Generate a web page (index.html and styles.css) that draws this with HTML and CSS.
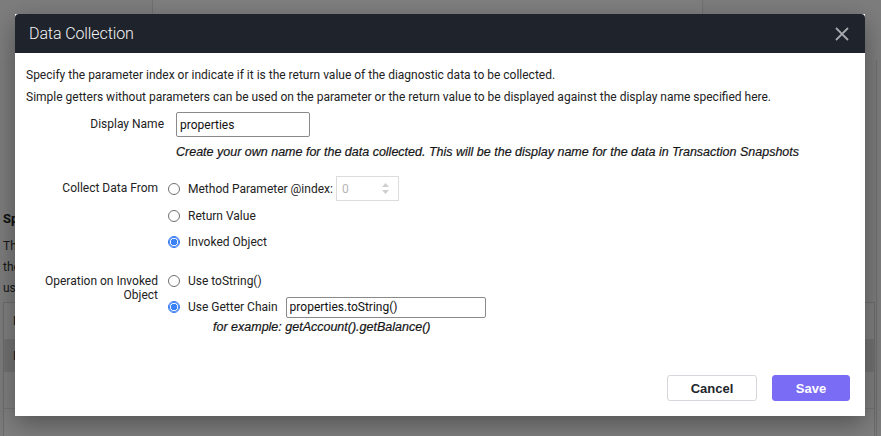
FILE: index.html
```html
<!DOCTYPE html>
<html lang="en">
<head>
<meta charset="utf-8">
<title>Data Collection</title>
<link rel="stylesheet" href="styles.css">
</head>
<body>
<div class="page">
  <div class="topbar">
    <div class="tb-a"></div>
    <div class="tb-b"></div>
    <div class="tb-c"></div>
  </div>
  <div class="content">
    <h3 class="sec-title">Spec</h3>
    <p class="sec-text">The<br>the<br>use</p>
    <div class="table">
      <div class="trow thead"><div class="cell c1">D</div><div class="cell c2"></div><div class="cell c3"></div></div>
      <div class="trow tsel"><div class="cell c1">P</div><div class="cell c2"></div><div class="cell c3"></div></div>
      <div class="trow"><div class="cell c1"></div><div class="cell c2"></div><div class="cell c3"></div></div>
    </div>
  </div>
  <div class="scroll"></div>
</div>
<div class="backdrop"></div>

<div class="modal">
  <div class="modal-header">
    <span class="modal-title">Data Collection</span>
    <svg class="close" width="14" height="14" viewBox="0 0 14 14"><path d="M1 1L13 13M13 1L1 13" stroke="#a6a8ad" stroke-width="1.8" fill="none"/></svg>
  </div>
  <div class="modal-body">
    <p class="intro">Specify the parameter index or indicate if it is the return value of the diagnostic data to be collected.</p>
    <p class="intro">Simple getters without parameters can be used on the parameter or the return value to be displayed against the display name specified here.</p>

    <div class="row row-name">
      <label class="lbl">Display Name</label>
      <div class="ctl">
        <input class="txt name-input" type="text" value="properties">
        <div class="hint">Create your own name for the data collected. This will be the display name for the data in Transaction Snapshots</div>
      </div>
    </div>

    <div class="row row-collect">
      <label class="lbl">Collect Data From</label>
      <div class="ctl">
        <div class="opt"><span class="radio"></span><span>Method Parameter @index:</span>
          <span class="num"><span class="num-val">0</span><svg class="spin" width="9" height="13" viewBox="0 0 9 13"><path d="M4.5 1L8 5H1Z M4.5 12L8 8H1Z" fill="#cfcfcf"/></svg></span>
        </div>
        <div class="opt"><span class="radio"></span><span>Return Value</span></div>
        <div class="opt"><span class="radio on"></span><span>Invoked Object</span></div>
      </div>
    </div>

    <div class="row row-op">
      <label class="lbl">Operation on Invoked Object</label>
      <div class="ctl">
        <div class="opt"><span class="radio"></span><span>Use toString()</span></div>
        <div class="opt"><span class="radio on"></span><span>Use Getter Chain</span><input class="txt getter-input" type="text" value="properties.toString()"></div>
        <div class="example">for example: getAccount().getBalance()</div>
      </div>
    </div>
  </div>
  <div class="modal-footer">
    <button class="btn btn-cancel">Cancel</button>
    <button class="btn btn-save">Save</button>
  </div>
</div>
</body>
</html>
```
FILE: styles.css
```css
html, body {
  margin: 0;
  padding: 0;
}
body {
  width: 881px;
  height: 436px;
  overflow: hidden;
  position: relative;
  font-family: Roboto, "Liberation Sans", sans-serif;
  background: #f4f4f4;
}

/* underlying page */
.page {
  height: 436px;
  display: flex;
  flex-direction: column;
  position: relative;
  overflow: hidden;
}
.topbar {
  height: 60px;
  display: flex;
  flex-shrink: 0;
}
.tb-a { width: 152px; background: #fbfbfb; border-right: 1px solid #e2e2e2; }
.tb-b { width: 549px; background: #ffffff; border-right: 1px solid #e2e2e2; }
.tb-c { flex: 1; background: #fbfbfb; }
.content {
  flex: 1;
  min-height: 0;
  overflow: hidden;
  padding: 150px 6px 0 3px;
  background: #f8f8f8;
}
.sec-title {
  margin: 0 0 8px;
  font-size: 13px;
  font-weight: 700;
  color: #222;
  line-height: 18px;
}
.sec-text {
  margin: 0 0 3px;
  font-size: 12px;
  line-height: 21px;
  color: #333;
}
.table {
  border: 1px solid #d9d9d9;
  background: #fff;
  height: 200px;
}
.trow {
  display: flex;
  height: 36px;
  border-bottom: 1px solid #e6e6e6;
}
.trow.tsel { background: #e4e4e4; height: 31px; }
.cell {
  font-size: 12px;
  color: #333;
  padding: 11px 9px;
  border-right: 1px solid #d4d4d4;
  box-sizing: border-box;
}
.tsel .cell { padding-top: 9px; }
.c1 { width: 330px; }
.c2 { width: 229px; }
.c3 { flex: 1; border-right: 0; }
.scroll {
  position: absolute;
  right: 4px;
  top: 60px;
  bottom: 0;
  width: 1px;
  background: #dcdcdc;
}

.backdrop {
  position: absolute;
  inset: 0;
  background: rgba(0, 0, 0, 0.5);
}

/* modal */
.modal {
  position: absolute;
  left: 15px;
  top: 14px;
  width: 850px;
  height: 402px;
  background: #fff;
  display: flex;
  flex-direction: column;
  box-shadow: 0 8px 24px rgba(0, 0, 0, 0.35);
}
.modal-header {
  height: 39px;
  background: #1f232b;
  border-radius: 4px 4px 0 0;
  display: flex;
  align-items: center;
  justify-content: space-between;
  padding: 0 16px 0 14px;
  flex-shrink: 0;
}
.modal-title {
  color: #f4f4f4;
  font-size: 16px;
  font-weight: 300;
  letter-spacing: -0.1px;
}
.close { display: block; }

.modal-body {
  flex: 1;
  padding: 11px 11px 0 11px;
  font-size: 12px;
  color: #222;
}
.intro {
  margin: 0;
  line-height: 22px;
}
.row {
  display: grid;
  grid-template-columns: 132px 1fr;
  column-gap: 10px;
}
.lbl {
  text-align: right;
  color: #222;
}
.row-name {
  margin-top: 4px;
  grid-template-columns: 138px 1fr;
  column-gap: 12px;
}
.row-name .lbl { line-height: 25px; }
.txt {
  font-family: Roboto, "Liberation Sans", sans-serif;
  font-size: 12px;
  color: #111;
  border: 1px solid #8a8a8a;
  border-radius: 2px;
  padding: 0 3px;
  margin: 0;
  box-sizing: border-box;
  outline: none;
}
.name-input {
  width: 134px;
  height: 25px;
  display: block;
}
.hint {
  margin-top: 8px;
  font-family: "Liberation Sans", Arial, sans-serif;
  font-style: italic;
  font-weight: 400;
  font-size: 12.5px;
  color: #151515;
  line-height: 15px;
  -webkit-text-stroke: 0.2px #151515;
}
.row-collect { margin-top: 16px; }
.row-collect .lbl { line-height: 25px; }
.opt {
  display: flex;
  align-items: center;
  gap: 8px;
  height: 26px;
}
.row-collect .opt:first-child { height: 25px; margin-bottom: 2px; }
.num {
  width: 63px;
  height: 25px;
  box-sizing: border-box;
  border: 1px solid #dcdcdc;
  margin-left: -5px;
  display: flex;
  align-items: center;
  justify-content: space-between;
  padding: 0 8px 0 5px;
  color: #b5b5b5;
}
.spin { display: block; }
.radio {
  width: 12px;
  height: 12px;
  box-sizing: border-box;
  border: 1px solid #6f6f6f;
  border-radius: 50%;
  flex-shrink: 0;
  background: #fff;
}
.radio.on {
  border: 1px solid #2f74f0;
  background: radial-gradient(circle, #3b82f6 0 3px, #fff 3.5px);
  box-shadow: inset 0 0 0 1px #3b82f6;
}
.row-op { margin-top: 13px; }
.row-op .lbl { line-height: 14px; padding-top: 6px; }
.getter-input {
  width: 200px;
  height: 21px;
  margin-left: 0;
}
.example {
  margin-left: 45px;
  font-family: "Liberation Sans", Arial, sans-serif;
  font-style: italic;
  font-weight: 400;
  font-size: 12.5px;
  color: #151515;
  -webkit-text-stroke: 0.2px #151515;
  line-height: 14px;
  margin-top: 0;
}

.modal-footer {
  display: flex;
  justify-content: flex-end;
  gap: 15px;
  padding: 0 15px 15px 0;
}
.btn {
  height: 26px;
  border-radius: 3px;
  font-family: "Liberation Sans", Arial, sans-serif;
  font-weight: 700;
  font-size: 13px;
  cursor: pointer;
}
.btn-cancel {
  width: 90px;
  background: #fff;
  border: 1px solid #d6d6dc;
  color: #22252b;
}
.btn-save {
  width: 78px;
  background: #7b6cf6;
  border: 1px solid #7b6cf6;
  color: #fff;
}
```
